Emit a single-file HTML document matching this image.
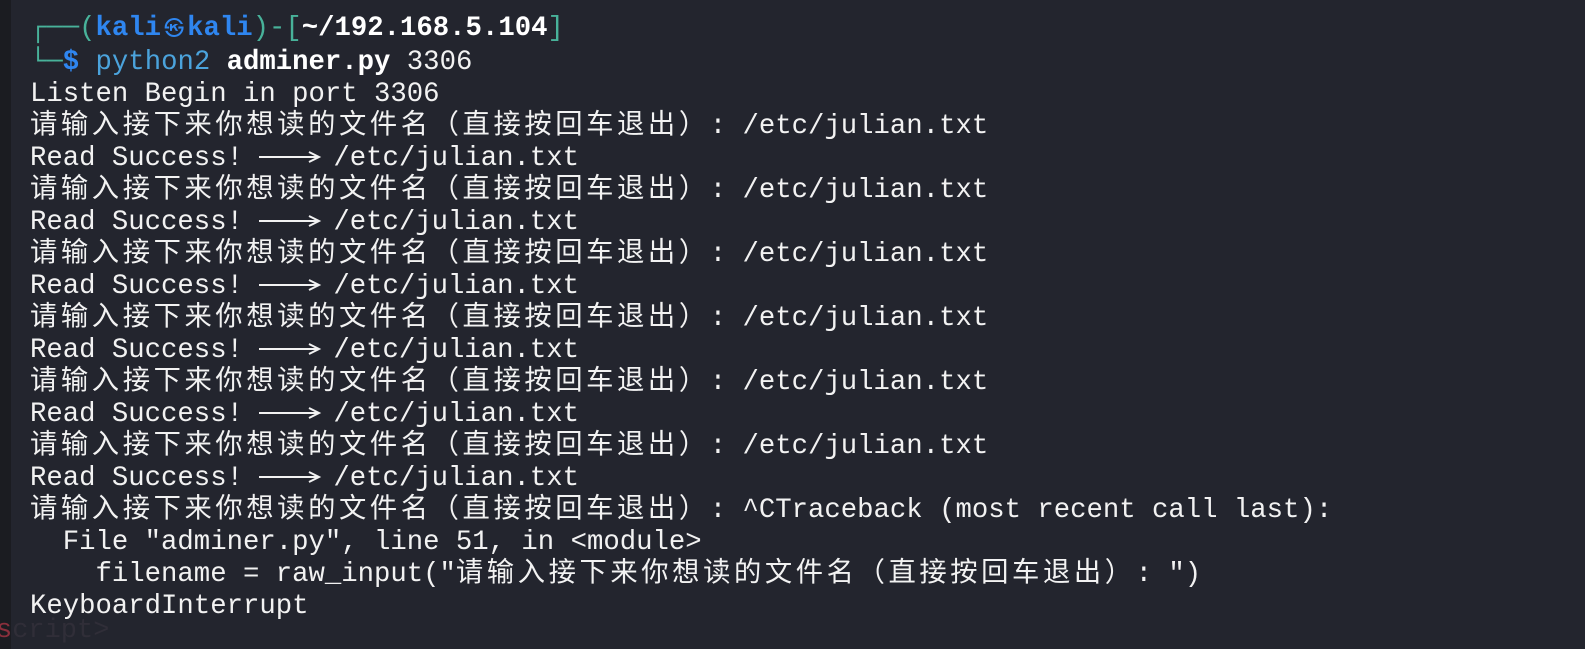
<!DOCTYPE html>
<html><head><meta charset="utf-8"><style>
html,body{margin:0;padding:0;}
body{width:1585px;height:649px;background:#23252e;overflow:hidden;position:relative;}
.strip{position:absolute;left:0;top:0;width:11px;height:649px;background:#1b1c21;}
pre{position:absolute;left:30px;top:13px;margin:0;font-family:"Liberation Mono","Noto Sans CJK SC",monospace;font-size:27.3px;line-height:32px;color:#f2f2f2;white-space:pre;}
.c{letter-spacing:3.6px;}
.g{color:#48b29a}
.b{color:#2f86f0;font-weight:bold}
.w{color:#fff;font-weight:bold}
.p{color:#4ba3dc}
.k{display:inline-block;width:26px;text-align:center;font-size:20px;font-weight:normal;}
.a{display:inline-block;width:74px;height:20px;vertical-align:-2px;}
.ghost{position:absolute;left:-4px;top:616px;font-family:"Liberation Mono",monospace;font-size:27px;color:#302e38;}
.ghost span{color:#8a2f3c}
</style></head><body>
<div class="strip"></div>
<pre><span class="g">┌──(</span><span class="b">kali<span class="k">㉿</span>kali</span><span class="g">)-[</span><span class="w">~/192.168.5.104</span><span class="g">]</span>
<span class="g">└─</span><span class="b">$</span> <span class="p">python2</span> <span class="w">adminer.py</span> 3306
Listen Begin in port 3306
<span class="c">请输入接下来你想读的文件名（直接按回车退出）</span>: /etc/julian.txt
Read Success! <svg class="a" viewBox="0 0 74 20"><path d="M0 10H58M50 5L60 10L50 15" stroke="#f2f2f2" stroke-width="2" fill="none"/></svg>/etc/julian.txt
<span class="c">请输入接下来你想读的文件名（直接按回车退出）</span>: /etc/julian.txt
Read Success! <svg class="a" viewBox="0 0 74 20"><path d="M0 10H58M50 5L60 10L50 15" stroke="#f2f2f2" stroke-width="2" fill="none"/></svg>/etc/julian.txt
<span class="c">请输入接下来你想读的文件名（直接按回车退出）</span>: /etc/julian.txt
Read Success! <svg class="a" viewBox="0 0 74 20"><path d="M0 10H58M50 5L60 10L50 15" stroke="#f2f2f2" stroke-width="2" fill="none"/></svg>/etc/julian.txt
<span class="c">请输入接下来你想读的文件名（直接按回车退出）</span>: /etc/julian.txt
Read Success! <svg class="a" viewBox="0 0 74 20"><path d="M0 10H58M50 5L60 10L50 15" stroke="#f2f2f2" stroke-width="2" fill="none"/></svg>/etc/julian.txt
<span class="c">请输入接下来你想读的文件名（直接按回车退出）</span>: /etc/julian.txt
Read Success! <svg class="a" viewBox="0 0 74 20"><path d="M0 10H58M50 5L60 10L50 15" stroke="#f2f2f2" stroke-width="2" fill="none"/></svg>/etc/julian.txt
<span class="c">请输入接下来你想读的文件名（直接按回车退出）</span>: /etc/julian.txt
Read Success! <svg class="a" viewBox="0 0 74 20"><path d="M0 10H58M50 5L60 10L50 15" stroke="#f2f2f2" stroke-width="2" fill="none"/></svg>/etc/julian.txt
<span class="c">请输入接下来你想读的文件名（直接按回车退出）</span>: ^CTraceback (most recent call last):
  File "adminer.py", line 51, in &lt;module&gt;
    filename = raw_input("<span class="c">请输入接下来你想读的文件名（直接按回车退出）</span>: ")
KeyboardInterrupt</pre>
<div class="ghost"><span>s</span>cript&gt;</div>
</body></html>
